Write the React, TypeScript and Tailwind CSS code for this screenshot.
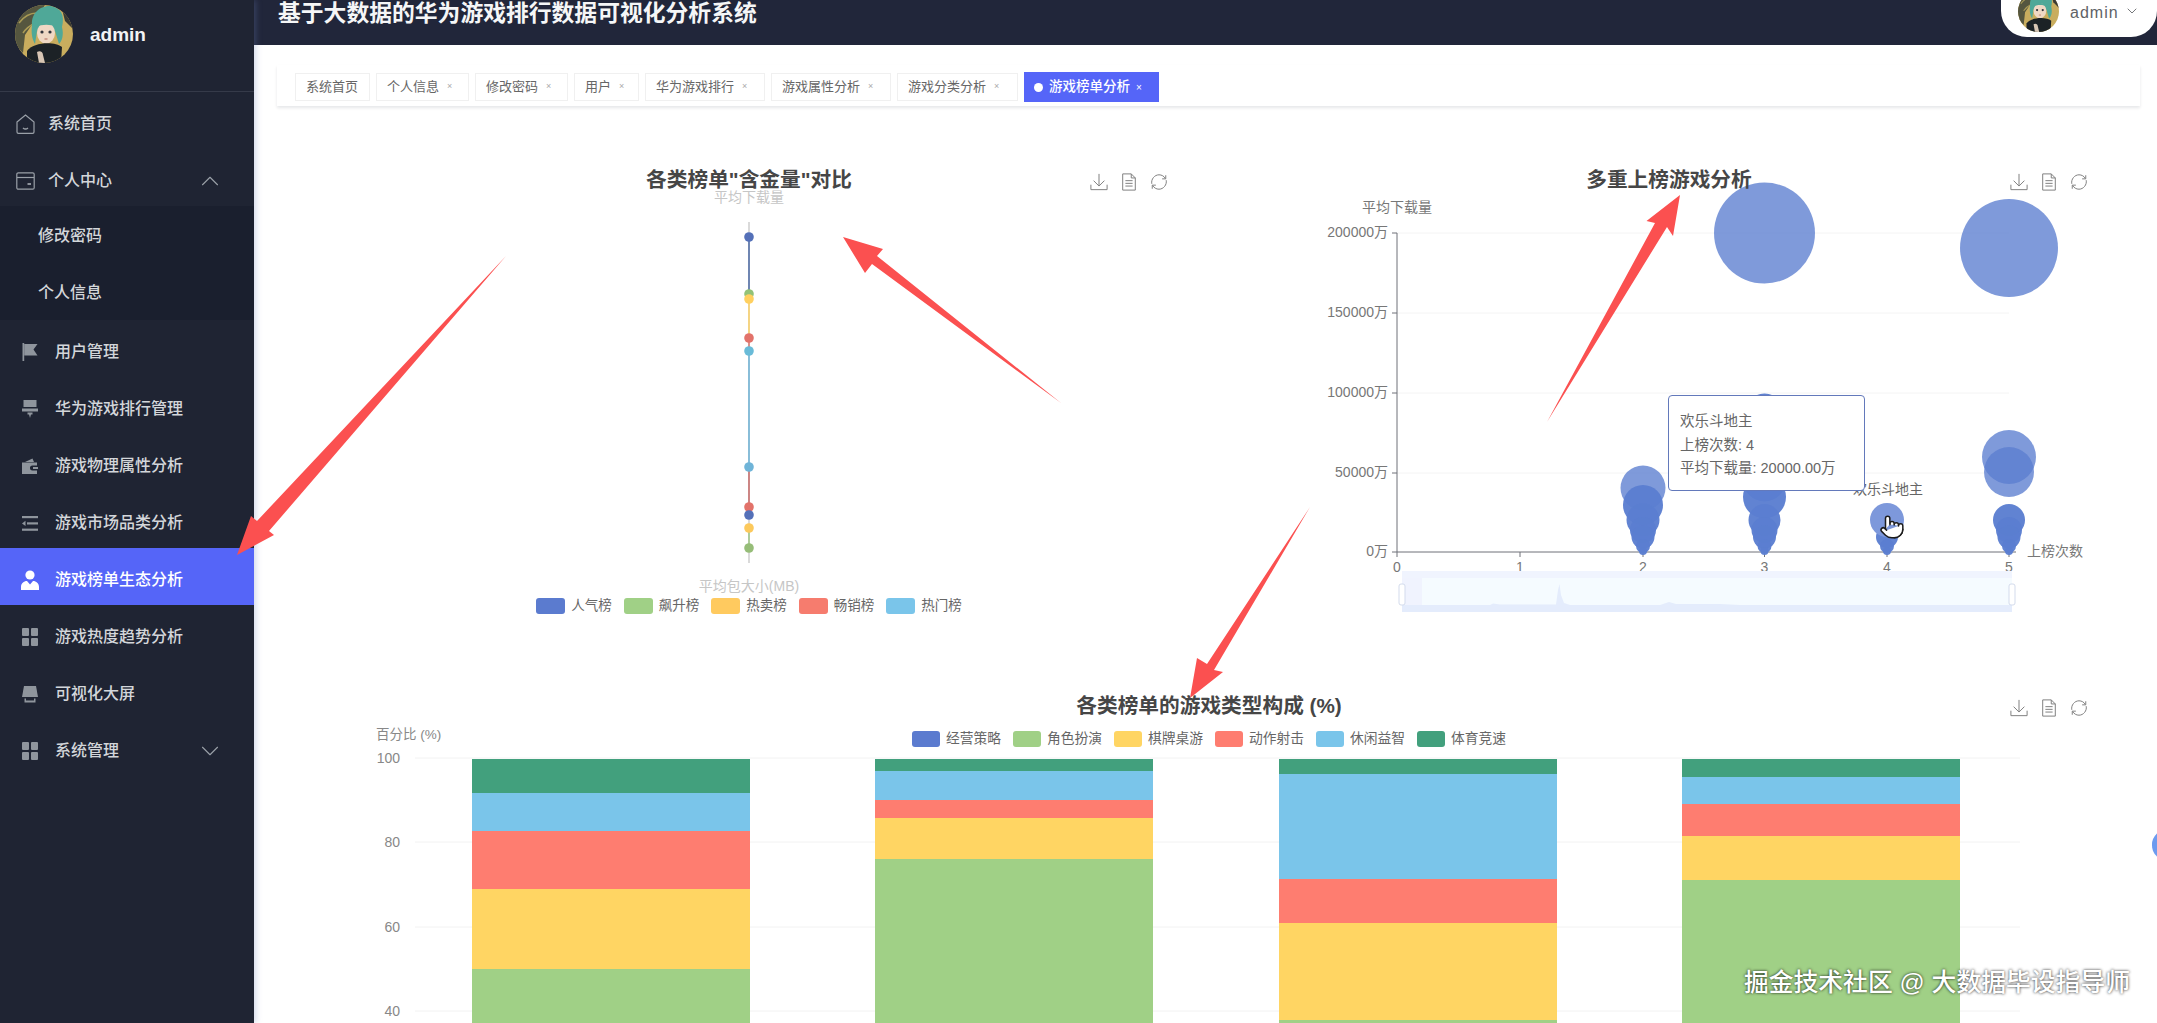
import { ChevronDown, ChevronUp, Pointer } from 'lucide-react';
import type { ReactNode } from 'react';

const tags = [
  { label: '系统首页', width: 'w-[75px]', close: false },
  { label: '个人信息', width: 'w-[93px]', close: true },
  { label: '修改密码', width: 'w-[93px]', close: true },
  { label: '用户', width: 'w-[65px]', close: true },
  { label: '华为游戏排行', width: 'w-[120px]', close: true },
  { label: '游戏属性分析', width: 'w-[120px]', close: true },
  { label: '游戏分类分析', width: 'w-[121px]', close: true },
];

const rankLegend = [
  { label: '人气榜', color: 'bg-[#5b7bcf]' },
  { label: '飙升榜', color: 'bg-[#a0d086]' },
  { label: '热卖榜', color: 'bg-[#ffca5f]' },
  { label: '畅销榜', color: 'bg-[#f67c6e]' },
  { label: '热门榜', color: 'bg-[#7ac5ea]' },
];

const typeLegend = [
  { label: '经营策略', color: 'bg-[#5b7bcf]' },
  { label: '角色扮演', color: 'bg-[#a0d086]' },
  { label: '棋牌桌游', color: 'bg-[#ffd563]' },
  { label: '动作射击', color: 'bg-[#fe7d70]' },
  { label: '休闲益智', color: 'bg-[#7ac5ea]' },
  { label: '体育竞速', color: 'bg-[#42a07d]' },
];

const stackColors = ['#42a07d', '#7ac5ea', '#fe7d70', '#ffd563', '#a0d086'];

// y boundaries of each stacked bar, top segment first
const stackedBars = [
  { x: 472, stops: [759, 793, 831, 889, 969, 1023] },
  { x: 875, stops: [759, 771, 800, 818, 859, 1023] },
  { x: 1279, stops: [759, 774, 879, 923, 1020, 1023] },
  { x: 1682, stops: [759, 777, 804, 836, 880, 1023] },
];

const rankDots = [
  { y: 237, color: '#5470b8' },
  { y: 294, color: '#92c277' },
  { y: 299, color: '#ffd05f' },
  { y: 338, color: '#e2726a' },
  { y: 351, color: '#69bbd8' },
  { y: 467, color: '#6fb4d8' },
  { y: 507, color: '#e2726a' },
  { y: 515, color: '#5470b8' },
  { y: 528, color: '#fcc95c' },
  { y: 548, color: '#96bd78' },
];

const rankLines = [
  { from: 237, to: 294, color: '#5470a8' },
  { from: 299, to: 338, color: '#fbd36e' },
  { from: 338, to: 351, color: '#d98078' },
  { from: 351, to: 467, color: '#74b6d8' },
  { from: 467, to: 507, color: '#c9706f' },
  { from: 528, to: 548, color: '#a3c98c' },
];

const bubbles = [
  [1764.5, 233, 50.5],
  [2009, 248, 49],
  [1643, 488, 22.5],
  [1643, 505, 20],
  [1643, 520, 16.5],
  [1643, 530, 13],
  [1643, 537, 11.5],
  [1643, 546, 7],
  [1643, 551, 4],
  [1764.5, 415, 21.5],
  [1764.5, 480, 21.5],
  [1764.5, 497, 21.5],
  [1764.5, 520, 16],
  [1764.5, 530, 13],
  [1764.5, 537, 11.5],
  [1764.5, 546, 7],
  [1764.5, 551, 4],
  [1887, 537, 11],
  [1887, 546, 7],
  [1887, 551, 4],
  [2009, 457, 27],
  [2009, 472, 25],
  [2009, 520, 16],
  [2009, 530, 13],
  [2009, 537, 11.5],
  [2009, 546, 7],
  [2009, 551, 4],
];

function Avatar() {
  return (
    <svg viewBox="0 0 58 58" className="block h-full w-full">
      <rect width="58" height="58" fill="#c9ad5e" />
      <path d="M0 0H30L10 30L8 48L0 40Z" fill="#55563f" />
      <path d="M4 18C10 10 16 8 22 8M8 28C12 22 16 20 20 18" stroke="#a99a55" strokeWidth="1.5" fill="none" />
      <path d="M46 0H58V24L50 16Z" fill="#3a3a34" />
      <path d="M17 20C16 6 28 0 36 1C46 3 50 10 47 22C49 30 47 36 44 39L40 26C36 22 24 22 22 26L20 39C17 34 16 28 17 20Z" fill="#4fa898" />
      <ellipse cx="31" cy="28" rx="9" ry="10.5" fill="#efd8c4" />
      <path d="M21 22C25 15 34 15 41 22C36 19 27 19 21 22Z" fill="#4fa898" />
      <circle cx="27" cy="27" r="1.6" fill="#33343c" />
      <circle cx="35" cy="27" r="1.6" fill="#33343c" />
      <path d="M29.5 34H32.5" stroke="#b0685a" strokeWidth="1" />
      <path d="M12 46C18 37 40 36 47 42L46 58H12Z" fill="#1c2226" />
      <path d="M22 47C25 45 28 47 28 50L30 58H24Z" fill="#d8c6b4" />
    </svg>
  );
}

function HomeIcon() {
  return (
    <svg viewBox="0 0 19 20" className="h-[20px] w-[19px]" fill="none" stroke="#9aa0a8" strokeWidth="1.2">
      <path d="M1 8L9.5 1L18 8V18C18 18.8 17.5 19.4 16.6 19.4H2.4C1.5 19.4 1 18.8 1 18Z" />
      <path d="M7 14C8.5 15.3 10.5 15.3 12 14" strokeWidth="1.4" />
    </svg>
  );
}

function CardIcon() {
  return (
    <svg viewBox="0 0 19 18" className="h-[18px] w-[19px]" fill="none" stroke="#9aa0a8" strokeWidth="1.2">
      <rect x="0.8" y="0.8" width="17.4" height="16.4" rx="1.5" />
      <path d="M1 5.5H18" />
      <path d="M11.5 12H15" strokeWidth="1.8" />
    </svg>
  );
}

function FlagIcon() {
  return (
    <svg viewBox="0 0 16 18" className="h-[18px] w-[16px]" fill="#8f959d">
      <path d="M0.5 0H2.2V18H0.5Z" />
      <path d="M2.2 1H15.5L11.5 6.5L15.5 12.5H2.2Z" />
    </svg>
  );
}

function StampIcon() {
  return (
    <svg viewBox="0 0 16 18" className="h-[18px] w-[16px]" fill="#8f959d">
      <path d="M1.5 0H14.5V7H1.5Z" />
      <path d="M0 8.5H16V11.5H0Z" />
      <path d="M5.5 12.5H10.5V14.5H9L8 18L7 14.5H5.5Z" />
    </svg>
  );
}

function WalletIcon() {
  return (
    <svg viewBox="0 0 16 16" className="h-[16px] w-[16px]" fill="#8f959d">
      <path d="M3 4L10.5 0.5L12 4Z" />
      <path d="M0 4.5H15V7.5H10.5C8.7 7.5 8 8.8 8 10C8 11.2 8.7 12.5 10.5 12.5H15V16H0Z" />
      <path d="M11 9H16V11H11Z" />
    </svg>
  );
}

function ListIcon() {
  return (
    <svg viewBox="0 0 16 15" className="h-[15px] w-[16px]" fill="#8f959d">
      <path d="M0 0H16V2.2H0Z" />
      <path d="M5 6.3H16V8.5H5Z" />
      <path d="M0 12.6H16V14.8H0Z" />
      <path d="M0 7.4L3.5 4.8V10Z" />
    </svg>
  );
}

function UserIcon() {
  return (
    <svg viewBox="0 0 18 20" className="h-[20px] w-[18px]" fill="#ffffff">
      <circle cx="9" cy="5" r="4.6" />
      <path d="M0 20V17C0 13.5 2.8 11 6 11L9 14.5L12 11C15.2 11 18 13.5 18 17V20Z" />
    </svg>
  );
}

function GridIcon() {
  return (
    <svg viewBox="0 0 16 18" className="h-[18px] w-[16px]" fill="#8f959d">
      <rect width="7" height="8" rx="1" />
      <rect x="9" width="7" height="8" rx="1" />
      <rect y="10" width="7" height="8" rx="1" />
      <rect x="9" y="10" width="7" height="8" rx="1" />
    </svg>
  );
}

function ScreenIcon() {
  return (
    <svg viewBox="0 0 16 17" className="h-[17px] w-[16px]" fill="#8f959d">
      <path d="M2 0H14L16 11H0Z" />
      <path d="M2.5 12.5H4V14.5H12V12.5H13.5V16.5H2.5Z" />
    </svg>
  );
}

function Toolbox() {
  return (
    <div className="flex justify-end gap-[12px] pr-[21px] pt-[4px]">
      <svg viewBox="0 0 20 20" className="h-[18px] w-[18px]" fill="none" stroke="#808080" strokeWidth="1.1">
        <path d="M10 1V14M4 8.5L10 14.5L16 8.5M1 13V18.5H19V13" />
      </svg>
      <svg viewBox="0 0 20 20" className="h-[18px] w-[18px]" fill="none" stroke="#808080" strokeWidth="1.1">
        <path d="M3 1H12.5L17 5.5V19H3ZM12.5 1V5.5H17" />
        <path d="M6 8.5H14M6 11.5H14M6 14.5H14" />
      </svg>
      <svg viewBox="0 0 20 20" className="h-[18px] w-[18px]" fill="none" stroke="#808080" strokeWidth="1.1">
        <path d="M2 12C1 7 5 2 10 2C13 2 15.5 3.5 17 6" />
        <path d="M18 8C19 13 15 18 10 18C7 18 4.5 16.5 3 14" />
        <path d="M13.5 6.5H17.5V2.5M6.5 13.5H2.5V17.5" />
      </svg>
    </div>
  );
}

function ChartTitle({ children }: { children: ReactNode }) {
  return (
    <div className="relative z-10 grid h-[40px] grid-cols-[1fr_auto_1fr] items-center">
      <div />
      <h2 className="text-[20.7px] font-bold text-[#464646]">{children}</h2>
      <Toolbox />
    </div>
  );
}

function Legend({ items, gap, swatch, text }: { items: { label: string; color: string }[]; gap: string; swatch: string; text: string }) {
  return (
    <div className={`flex h-[16px] items-center justify-center ${gap}`}>
      {items.map((item) => (
        <div key={item.label} className="flex items-center gap-[6px]">
          <span className={`h-[16px] rounded-[3px] ${swatch} ${item.color}`} />
          <span className={`leading-[16px] text-[#666666] ${text}`}>{item.label}</span>
        </div>
      ))}
    </div>
  );
}

function NavItem({ icon, label, wide, right, active }: { icon: ReactNode; label: string; wide?: boolean; right?: ReactNode; active?: boolean }) {
  return (
    <div className={`flex h-[57px] items-center pt-[7px] ${wide ? 'pl-[16px] gap-[13px]' : 'pl-[21px]'} ${active ? 'bg-[#5565f8] text-white' : 'text-[#d3d6da]'}`}>
      <span className={`flex shrink-0 justify-center ${wide ? '' : 'w-[18px] mr-[16px]'}`}>{icon}</span>
      <span className="text-[16px] font-medium">{label}</span>
      {right}
    </div>
  );
}

function Sidebar() {
  return (
    <aside className="relative z-10 h-full w-[254px] shrink-0 bg-[#1f2433] shadow-[2px_0_6px_rgba(110,130,190,0.3)]">
      <div className="flex h-[92px] items-start gap-[17px] border-b border-[#353a49] pl-[15px] pt-[5px]">
        <div className="h-[58px] w-[58px] overflow-hidden rounded-full">
          <Avatar />
        </div>
        <span className="text-[19px] font-bold leading-[60px] text-[#f2f3f5]">admin</span>
      </div>
      <NavItem icon={<HomeIcon />} label="系统首页" wide />
      <NavItem
        icon={<CardIcon />}
        label="个人中心"
        wide
        right={<ChevronUp size={30} strokeWidth={0.9} className="ml-auto mr-[29px] text-[#9aa0a8]" />}
      />
      <div className="bg-[#1a1f2e] text-[16px] font-medium text-[#d3d6da]">
        <div className="flex h-[57px] items-center pl-[38px] pt-[2px]">修改密码</div>
        <div className="flex h-[57px] items-center pl-[38px] pt-[2px]">个人信息</div>
      </div>
      <NavItem icon={<FlagIcon />} label="用户管理" />
      <NavItem icon={<StampIcon />} label="华为游戏排行管理" />
      <NavItem icon={<WalletIcon />} label="游戏物理属性分析" />
      <NavItem icon={<ListIcon />} label="游戏市场品类分析" />
      <NavItem icon={<UserIcon />} label="游戏榜单生态分析" active />
      <NavItem icon={<GridIcon />} label="游戏热度趋势分析" />
      <NavItem icon={<ScreenIcon />} label="可视化大屏" />
      <NavItem
        icon={<GridIcon />}
        label="系统管理"
        right={<ChevronDown size={30} strokeWidth={0.9} className="ml-auto mr-[29px] text-[#9aa0a8]" />}
      />
    </aside>
  );
}

function Header() {
  return (
    <header className="flex h-[45px] shrink-0 items-start bg-[#21263a] pl-[24px]">
      <h1 className="text-[22.8px] font-bold leading-[26px] text-[#f5f6f7]">基于大数据的华为游戏排行数据可视化分析系统</h1>
      <div className="ml-auto flex h-[37px] w-[156px] items-start overflow-hidden rounded-b-[26px] bg-white pl-[17px]">
        <div className="-mt-[9px] h-[41px] w-[41px] shrink-0 overflow-hidden rounded-full">
          <Avatar />
        </div>
        <span className="ml-[11px] text-[16px] leading-[26px] tracking-[1px] text-[#606266]">admin</span>
        <ChevronDown size={16} strokeWidth={1.3} className="ml-[5px] mt-[3px] text-[#606266]" />
      </div>
    </header>
  );
}

function TagBar() {
  return (
    <div className="ml-[23px] mr-[17px] mt-[20px] flex h-[41px] items-center gap-[6px] bg-white pl-[18px] pt-[3px] shadow-[0_2px_3px_rgba(0,21,41,0.1)]">
      {tags.map((tag) => (
        <div key={tag.label} className={`flex h-[28px] items-center border border-[#f0f0f0] pl-[10px] text-[13px] text-[#666666] ${tag.width}`}>
          {tag.label}
          {tag.close && <span className="ml-[8px] text-[9px] text-[#aaaaaa]">×</span>}
        </div>
      ))}
      <div className="flex h-[30px] w-[135px] items-center bg-[#5565f8] pl-[10px] text-[13.5px] font-medium text-white">
        <span className="mr-[6px] h-[9px] w-[9px] rounded-full bg-white" />
        游戏榜单分析
        <span className="ml-[6px] text-[10px]">×</span>
      </div>
    </div>
  );
}

function RankChart() {
  return (
    <div>
      <ChartTitle>各类榜单"含金量"对比</ChartTitle>
      <svg viewBox="309 188 880 408" className="-mt-[12px] block h-[408px] w-[880px] overflow-visible">
        <text x="749" y="202" textAnchor="middle" className="fill-[#c6c6c6] text-[14px]">平均下载量</text>
        <line x1="749" x2="749" y1="222" y2="563" stroke="#b5b5b5" />
        {rankLines.map((line) => (
          <line key={line.from} x1="749" x2="749" y1={line.from} y2={line.to} stroke={line.color} strokeWidth="1.6" />
        ))}
        {rankDots.map((dot) => (
          <circle key={dot.y} cx="749" cy={dot.y} r="4.8" fill={dot.color} />
        ))}
        <text x="749" y="591" textAnchor="middle" className="fill-[#c6c6c6] text-[14px]">平均包大小(MB)</text>
      </svg>
      <div className="mt-[2px]">
        <Legend items={rankLegend} gap="gap-[12px]" swatch="w-[29px]" text="text-[13.5px]" />
      </div>
    </div>
  );
}

function BubbleChart() {
  const yTicks = [
    { y: 233, label: '200000万' },
    { y: 313, label: '150000万' },
    { y: 393, label: '100000万' },
    { y: 473, label: '50000万' },
    { y: 552, label: '0万' },
  ];
  const xTicks = [1397, 1520, 1643, 1764.5, 1887, 2009];

  return (
    <div className="relative">
      <ChartTitle>多重上榜游戏分析</ChartTitle>
      <svg viewBox="1229 188 880 438" className="-mt-[12px] block h-[438px] w-[880px] overflow-visible">
        <text x="1397" y="212" textAnchor="middle" className="fill-[#777777] text-[14px]">平均下载量</text>
        {yTicks.map((tick) => (
          <g key={tick.y}>
            {tick.y !== 552 && <line x1="1397" x2="2009" y1={tick.y} y2={tick.y} stroke="#f4f4f4" />}
            <line x1="1392" x2="1397" y1={tick.y} y2={tick.y} stroke="#6e7079" />
            <text x="1388" y={tick.y + 4} textAnchor="end" className="fill-[#777777] text-[14px]">{tick.label}</text>
          </g>
        ))}
        <line x1="1397" x2="1397" y1="233" y2="552" stroke="#6e7079" />
        <line x1="1397" x2="2016" y1="552" y2="552" stroke="#6e7079" />
        {xTicks.map((x, i) => (
          <g key={x}>
            <line x1={x} x2={x} y1="552" y2="557" stroke="#6e7079" />
            <text x={x} y="572" textAnchor="middle" className="fill-[#777777] text-[14px]">{i}</text>
          </g>
        ))}
        <text x="2027" y="556" className="fill-[#777777] text-[14px]">上榜次数</text>
        {bubbles.map(([cx, cy, r]) => (
          <circle key={`${cx}-${cy}`} cx={cx} cy={cy} r={r} fill="#5b7ed0" fillOpacity={r > 21.9 ? 0.78 : 0.96} />
        ))}
        <circle cx="1887" cy="520" r="17" fill="#7d98db" />
        <text x="1888" y="494" textAnchor="middle" className="fill-[#666666] text-[14px]">欢乐斗地主</text>
        <rect x="1402" y="571" width="610" height="41" fill="#f5fbff" />
        <rect x="1402" y="571" width="610" height="7" fill="#f0f4fe" />
        <rect x="1402" y="578" width="20" height="27" fill="#f0f3fe" />
        <path d="M1402 612V605H1490L1493 603.5L1500 604.5H1556L1558 590L1559.5 584L1561 595L1564 603L1570 605H1660L1669 602L1676 604H1720L1740 605H2012V612Z" fill="#e4ecfc" />
        <rect x="1399" y="584" width="6" height="21" rx="2" fill="#ffffff" stroke="#d3dbec" />
        <rect x="2009" y="584" width="6" height="21" rx="2" fill="#ffffff" stroke="#d3dbec" />
      </svg>
      <div className="absolute left-[439px] top-[235px] h-[96px] w-[197px] rounded-[4px] border border-[#6379bb] bg-white pl-[11px] pt-[14px] text-[14.5px] leading-[23.5px] text-[#666666]">
        <div>欢乐斗地主</div>
        <div>上榜次数: 4</div>
        <div>平均下载量: 20000.00万</div>
      </div>
      <Pointer size={26} strokeWidth={1.4} className="absolute left-[650px] top-[354px] fill-white text-[#1c1c1c]" />
    </div>
  );
}

function StackChart() {
  const ticks = [
    { y: 758, label: '100' },
    { y: 842, label: '80' },
    { y: 927, label: '60' },
    { y: 1011, label: '40' },
  ];

  return (
    <div>
      <ChartTitle>各类榜单的游戏类型构成 (%)</ChartTitle>
      <div className="mt-[5px]">
        <Legend items={typeLegend} gap="gap-[12px]" swatch="w-[28px]" text="text-[13.75px]" />
      </div>
      <svg viewBox="309 747 1800 276" className="block h-[276px] w-[1800px] overflow-visible">
        <text x="376" y="739" className="fill-[#888888] text-[13.5px]">百分比 (%)</text>
        {ticks.map((tick) => (
          <g key={tick.y}>
            <line x1="415" x2="2020" y1={tick.y} y2={tick.y} stroke="#f2f2f2" />
            <text x="400" y={tick.y + 5} textAnchor="end" className="fill-[#888888] text-[14px]">{tick.label}</text>
          </g>
        ))}
        {stackedBars.map((bar) =>
          stackColors.map((color, i) => (
            <rect key={`${bar.x}-${color}`} x={bar.x} y={bar.stops[i]} width="278" height={bar.stops[i + 1] - bar.stops[i]} fill={color} />
          )),
        )}
      </svg>
    </div>
  );
}

export default function App() {
  return (
    <div className="relative flex h-screen w-full overflow-hidden bg-white font-['Liberation_Sans','Noto_Sans_CJK_SC',sans-serif]">
      <Sidebar />
      <main className="flex min-w-0 flex-1 flex-col">
        <Header />
        <TagBar />
        <div className="pl-[55px] pr-[48px] pt-[54px]">
          <div className="grid h-[526px] grid-cols-2 gap-x-[40px]">
            <RankChart />
            <BubbleChart />
          </div>
          <StackChart />
        </div>
      </main>

      {/* red annotation arrows drawn over the screenshot */}
      <svg viewBox="0 0 2157 1023" className="pointer-events-none absolute inset-0 z-20 h-full w-full">
        <g fill="#fb5050">
          <polygon points="506,256 269,531 274,535 237,555 251,516 257,521" />
          <polygon points="843,237 883,249 877,256 1061,403 872,264 865,273" />
          <polygon points="1680,195 1673,236 1667,227 1547,422 1655,223 1646.5,221" />
          <polygon points="1190,698 1197,658 1207,664 1310,507 1214,670 1223,672" />
        </g>
      </svg>

      <div className="absolute right-[-24px] top-[830px] z-20 h-[30px] w-[29px] rounded-full bg-[#6d9bef]" />
      <div className="absolute right-[27px] top-[967px] z-20 text-[24.8px] font-medium leading-[32px] text-white [text-shadow:0_0_3px_rgba(0,0,0,0.9)]">
        掘金技术社区 @ 大数据毕设指导师
      </div>
    </div>
  );
}
